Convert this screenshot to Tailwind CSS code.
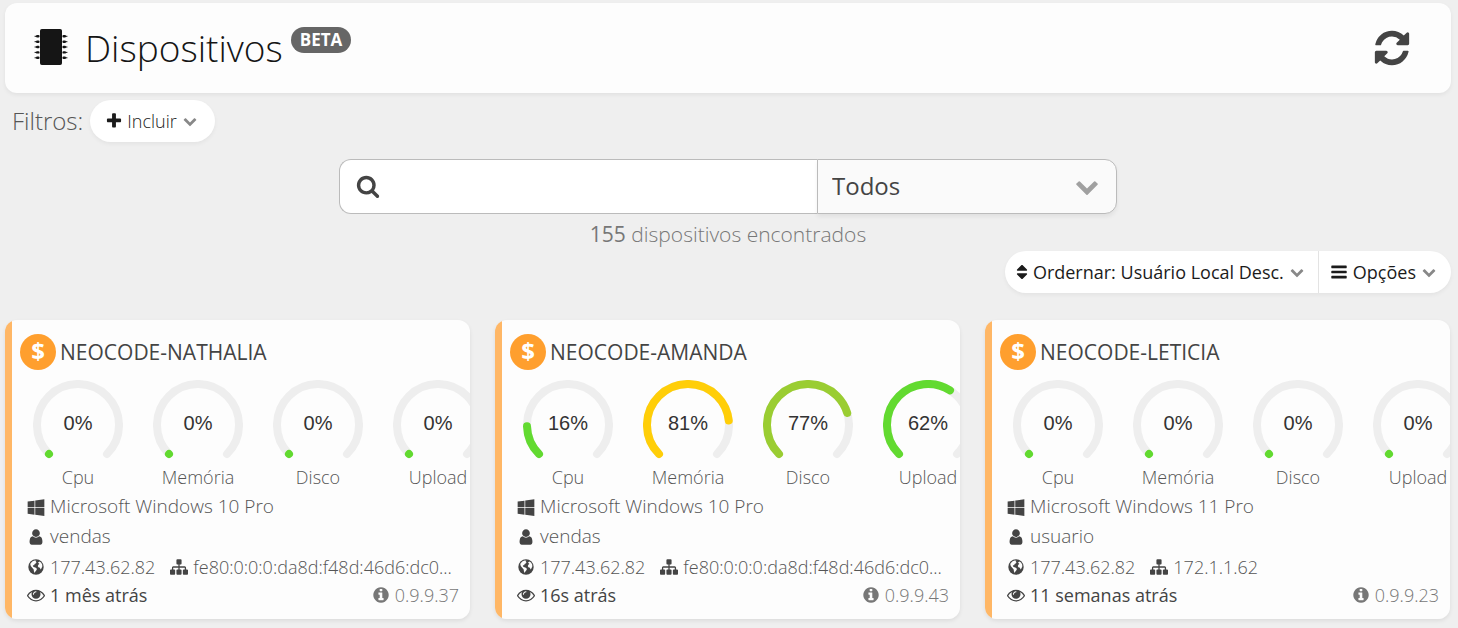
<!DOCTYPE html>
<html lang="pt-BR">
<head>
    <meta charset="UTF-8">
    <meta name="viewport" content="width=device-width, initial-scale=1.0">
    <title>Dispositivos</title>
    <script src="https://cdn.jsdelivr.net/npm/@tailwindcss/browser@4"></script>
</head>
<body class="bg-[#efefef] min-h-screen overflow-x-hidden font-['Open_Sans',sans-serif] font-light text-[#444]">
    <!-- Icon set -->
    <svg class="hidden" xmlns="http://www.w3.org/2000/svg">
        <symbol id="i-refresh" viewBox="0 0 1792 1792"><path d="M1639 1056q0 5-1 7-64 268-268 434.500t-478 166.500q-146 0-282.500-55t-243.500-157l-129 129q-19 19-45 19t-45-19-19-45v-448q0-26 19-45t45-19h448q26 0 45 19t19 45-19 45l-137 137q71 66 161 102t187 36q134 0 250-65t186-179q11-17 53-117 8-23 30-23h192q13 0 22.500 9.500t9.500 22.500zm25-800v448q0 26-19 45t-45 19h-448q-26 0-45-19t-19-45 19-45l138-138q-148-137-349-137-134 0-250 65t-186 179q-11 17-53 117-8 23-30 23h-199q-13 0-22.500-9.500t-9.500-22.500v-7q65-268 270-434.500t480-166.500q146 0 284 55.500t245 156.500l130-129q19-19 45-19t45 19 19 45z"/></symbol>
        <symbol id="i-search" viewBox="0 0 1792 1792"><path d="M1216 832q0-185-131.500-316.500t-316.500-131.500-316.500 131.500-131.500 316.500 131.500 316.500 316.500 131.500 316.500-131.500 131.500-316.500zm512 832q0 52-38 90t-90 38q-54 0-90-38l-343-342q-179 124-399 124-143 0-273.500-55.500t-225-150-150-225-55.500-273.500 55.500-273.500 150-225 225-150 273.500-55.500 273.500 55.500 225 150 150 225 55.500 273.500q0 220-124 399l343 343q37 37 37 90z"/></symbol>
        <symbol id="i-plus" viewBox="0 0 1792 1792"><path d="M1600 736v192q0 40-28 68t-68 28h-416v416q0 40-28 68t-68 28h-192q-40 0-68-28t-28-68v-416h-416q-40 0-68-28t-28-68v-192q0-40 28-68t68-28h416v-416q0-40 28-68t68-28h192q40 0 68 28t28 68v416h416q40 0 68 28t28 68z"/></symbol>
        <symbol id="i-down" viewBox="0 0 1792 1792"><path d="M1683 808l-742 741q-19 19-45 19t-45-19l-742-741q-19-19-19-45.500t19-45.500l166-165q19-19 45-19t45 19l531 531 531-531q19-19 45-19t45 19l166 165q19 19 19 45.500t-19 45.500z"/></symbol>
        <symbol id="i-sort" viewBox="0 0 1792 1792"><path d="M1408 1088q0 26-19 45l-448 448q-19 19-45 19t-45-19l-448-448q-19-19-19-45t19-45 45-19h896q26 0 45 19t19 45zm0-384q0 26-19 45t-45 19h-896q-26 0-45-19t-19-45 19-45l448-448q19-19 45-19t45 19l448 448q19 19 19 45z"/></symbol>
        <symbol id="i-bars" viewBox="0 0 1792 1792"><path d="M1664 1344v128q0 26-19 45t-45 19h-1408q-26 0-45-19t-19-45v-128q0-26 19-45t45-19h1408q26 0 45 19t19 45zm0-512v128q0 26-19 45t-45 19h-1408q-26 0-45-19t-19-45v-128q0-26 19-45t45-19h1408q26 0 45 19t19 45zm0-512v128q0 26-19 45t-45 19h-1408q-26 0-45-19t-19-45v-128q0-26 19-45t45-19h1408q26 0 45 19t19 45z"/></symbol>
        <symbol id="i-windows" viewBox="0 0 1792 1792"><path d="M746 1006v651l-682-94v-557h682zm0-743v659h-682v-565zm982 743v786l-907-125v-661h907zm0-878v794h-907v-669z"/></symbol>
        <symbol id="i-user" viewBox="0 0 1792 1792"><path d="M1536 1399q0 109-62.500 187t-150.500 78h-854q-88 0-150.500-78t-62.500-187q0-85 8.500-160.500t31.500-152 58.500-131 94-89 134.500-34.500q131 128 313 128t313-128q76 0 134.500 34.500t94 89 58.500 131 31.500 152 8.500 160.500zm-256-887q0 159-112.500 271.500t-271.500 112.500-271.500-112.500-112.500-271.500 112.500-271.500 271.500-112.500 271.500 112.500 112.500 271.500z"/></symbol>
        <symbol id="i-globe" viewBox="0 0 18 18"><circle cx="9" cy="9" r="7.700"/><path fill="#fdfdfd" d="M3.600 5.200 5.600 3.300 7.600 2.600 9.400 2.800 8.600 3.900 9.600 4.600 8.600 5.600 7.600 6 7.200 7.200 5.900 7.300 6 8.600 7.400 9.200 8.900 9.800 10 11 9.200 12.400 8.200 13.800 7.600 15 6.900 13.200 6.700 11.400 5.200 9.800 3.900 8.200 3.300 6.600zM11 4.400 12.400 3.500 14 4.500 15.200 6.600 15.300 8.600 14.400 10.600 13.600 11.400 12.900 9.700 11.400 9.200 10.800 7.900 11.500 6.600 12.400 6z"/></symbol>
        <symbol id="i-sitemap" viewBox="0 0 1792 1792"><path d="M1792 1248v320q0 40-28 68t-68 28h-320q-40 0-68-28t-28-68v-320q0-40 28-68t68-28h96v-192h-512v192h96q40 0 68 28t28 68v320q0 40-28 68t-68 28h-320q-40 0-68-28t-28-68v-320q0-40 28-68t68-28h96v-192h-512v192h96q40 0 68 28t28 68v320q0 40-28 68t-68 28h-320q-40 0-68-28t-28-68v-320q0-40 28-68t68-28h96v-192q0-52 38-90t90-38h512v-192h-96q-40 0-68-28t-28-68v-320q0-40 28-68t68-28h320q40 0 68 28t28 68v320q0 40-28 68t-68 28h-96v192h512q52 0 90 38t38 90v192h96q40 0 68 28t28 68z"/></symbol>
        <symbol id="i-eye" viewBox="0 0 1792 1792"><path d="M1664 960q-152-236-381-353 61 104 61 225 0 185-131.500 316.500t-316.500 131.500-316.500-131.500-131.500-316.500q0-121 61-225-229 117-381 353 133 205 333.500 326.500t434.500 121.500 434.500-121.500 333.500-326.500zm-720-384q0-20-14-34t-34-14q-125 0-214.500 89.500t-89.500 214.500q0 20 14 34t34 14 34-14 14-34q0-86 61-147t147-61q20 0 34-14t14-34zm848 384q0 34-20 69-140 230-376.500 368.500t-499.500 138.500-499.500-139-376.500-368q-20-35-20-69t20-69q140-229 376.500-368t499.500-139 499.500 139 376.500 368q20 35 20 69z"/></symbol>
        <symbol id="i-info" viewBox="0 0 1792 1792"><path d="M1152 1376v-160q0-14-9-23t-23-9h-96v-512q0-14-9-23t-23-9h-320q-14 0-23 9t-9 23v160q0 14 9 23t23 9h96v320h-96q-14 0-23 9t-9 23v160q0 14 9 23t23 9h448q14 0 23-9t9-23zm-128-896v-160q0-14-9-23t-23-9h-192q-14 0-23 9t-9 23v160q0 14 9 23t23 9h192q14 0 23-9t9-23zm640 416q0 209-103 385.500t-279.500 279.500-385.500 103-385.500-103-279.500-279.500-103-385.500 103-385.500 279.500-279.500 385.500-103 385.500 103 279.500 279.500 103 385.500z"/></symbol>
    </svg>

    <div class="pt-[3px] pl-[5px] pr-[7px]">
        <!-- Header -->
        <header class="flex items-center justify-between h-[90px] pl-7 pr-[39px] bg-[#fdfdfd] rounded-xl shadow-[0_2px_4px_rgba(0,0,0,0.06)]">
            <div class="flex items-center">
                <svg class="w-9 h-9 -mt-0.5 text-[#151515]" viewBox="0 0 36 36" fill="currentColor" stroke="currentColor">
                    <rect x="7.500" y="0.500" width="21" height="35" rx="1"/>
                    <path stroke-width="2.400" stroke-linecap="round" d="M4.200 7.300h1.200M4.200 12.700h1.200M4.200 18h1.200M4.200 23.400h1.200M4.200 28.800h1.200M30.600 7.300h1.200M30.600 12.700h1.200M30.600 18h1.200M30.600 23.400h1.200M30.600 28.800h1.200"/>
                    <path stroke-width="1" d="M1.600 7.300h3M1.600 12.700h3M1.600 18h3M1.600 23.400h3M1.600 28.800h3M31.400 7.300h3M31.400 12.700h3M31.400 18h3M31.400 23.400h3M31.400 28.800h3"/>
                </svg>
                <h1 class="ml-4 text-[37px] leading-[54px] text-[#151515]">Dispositivos</h1>
                <span class="ml-2 mb-4 px-[9px] rounded-full bg-[#666] text-white text-[17px] leading-[26px] font-bold">BETA</span>
            </div>
            <button type="button" aria-label="Atualizar" class="text-[#444]"><svg class="w-10 h-10" fill="currentColor"><use href="#i-refresh"/></svg></button>
        </header>

        <!-- Filters -->
        <div class="flex items-center mt-[7px] pl-[7px]">
            <span class="text-2xl leading-8 text-[#555]">Filtros:</span>
            <button type="button" class="flex items-center h-[42px] ml-[7px] pl-[15px] pr-[18px] rounded-full bg-white text-lg text-[#1b1b1b] shadow-[0_2px_4px_rgba(0,0,0,0.05)]">
                <svg class="w-[18px] h-[18px] mr-1" fill="currentColor"><use href="#i-plus"/></svg>
                Incluir
                <svg class="w-[14px] h-[14px] ml-1.5 text-[#888]" fill="currentColor"><use href="#i-down"/></svg>
            </button>
        </div>

        <!-- Search -->
        <form class="flex w-full max-w-[778px] h-[55px] mx-auto mt-[17px] font-normal">
            <label for="search" class="flex items-center w-[50px] pl-4 pb-0.5 bg-white border border-r-0 border-[#bbb] rounded-l-xl">
                <svg class="w-6 h-6" fill="currentColor" role="img" aria-label="Buscar"><use href="#i-search"/></svg>
            </label>
            <input id="search" type="text" class="flex-1 min-w-0 bg-white border-y border-[#bbb] text-2xl outline-none">
            <div class="relative w-[300px]">
                <select aria-label="Grupo" class="appearance-none w-full h-full pl-[14px] pb-0.5 bg-[#fafafa] border border-[#bbb] rounded-r-xl text-2xl text-[#444] shadow-[0_3px_4px_rgba(0,0,0,0.06)]">
                    <option>Todos</option>
                </select>
                <svg class="absolute right-[18px] top-[15px] w-6 h-6 text-[#a0a0a0] pointer-events-none" fill="currentColor"><use href="#i-down"/></svg>
            </div>
        </form>
        <p class="mt-1.5 text-center text-[21px] leading-7 text-[#777]"><span class="font-normal">155</span> dispositivos encontrados</p>

        <!-- Sorting and options -->
        <div class="flex justify-end mt-[3px]">
            <div class="flex h-[42px] rounded-full bg-white text-lg font-normal text-[#1b1b1b] shadow-[0_2px_4px_rgba(0,0,0,0.05)]">
                <button type="button" class="flex items-center pl-2 pr-[14px] border-r border-[#e3e3e3]">
                    <svg class="w-[18px] h-[18px] mr-0.5" fill="currentColor"><use href="#i-sort"/></svg>
                    Ordernar: Usuário Local Desc.
                    <svg class="w-[14px] h-[14px] ml-1.5 text-[#888]" fill="currentColor"><use href="#i-down"/></svg>
                </button>
                <button type="button" class="flex items-center pl-[11px] pr-[15px]">
                    <svg class="w-[18px] h-[18px] mr-[5px]" fill="currentColor"><use href="#i-bars"/></svg>
                    Opções
                    <svg class="w-[14px] h-[14px] ml-1.5 text-[#888]" fill="currentColor"><use href="#i-down"/></svg>
                </button>
            </div>
        </div>

        <!-- Device cards -->
        <main id="devices" class="grid grid-cols-3 gap-[25px] mt-[27px] pr-px pb-2"></main>
    </div>

    <script>
        const devices = [
            { name: 'NEOCODE-NATHALIA', usage: [0, 0, 0, 0], os: 'Microsoft Windows 10 Pro', user: 'vendas', ip: '177.43.62.82', local: 'fe80:0:0:0:da8d:f48d:46d6:dc0...', seen: '1 mês atrás', version: '0.9.9.37' },
            { name: 'NEOCODE-AMANDA', usage: [16, 81, 77, 62], os: 'Microsoft Windows 10 Pro', user: 'vendas', ip: '177.43.62.82', local: 'fe80:0:0:0:da8d:f48d:46d6:dc0...', seen: '16s atrás', version: '0.9.9.43' },
            { name: 'NEOCODE-LETICIA', usage: [0, 0, 0, 0], os: 'Microsoft Windows 11 Pro', user: 'usuario', ip: '177.43.62.82', local: '172.1.1.62', seen: '11 semanas atrás', version: '0.9.9.23' }
        ];
        const labels = ['Cpu', 'Memória', 'Disco', 'Upload'];

        function icon(name) {
            return `<svg class="w-[18px] h-[18px] shrink-0 text-[#444]" fill="currentColor"><use href="#i-${name}"/></svg>`;
        }

        function usageColor(value) {
            if (value > 80) return '#ffce08';
            if (value > 70) return '#9acd32';
            return '#62da30';
        }

        // 270 degree gauge, open at the bottom
        function gauge(value, label) {
            const arc = 'M16 74A41 41 0 1 1 74 74';
            return `
                <div class="w-[120px] shrink-0 flex flex-col items-center">
                    <svg class="w-[90px] h-[90px]" viewBox="0 0 90 90" fill="none" stroke-width="8" stroke-linecap="round">
                        <path d="${arc}" stroke="#eee"/>
                        <path d="${arc}" stroke="${usageColor(value)}" pathLength="100" stroke-dasharray="${value || 0.01} 200"/>
                        <text x="45" y="50" text-anchor="middle" fill="#333" class="font-['Liberation_Sans',sans-serif] text-xl font-normal">${value}%</text>
                    </svg>
                    <span class="-mt-[5px] text-lg leading-6 text-[#555]">${label}</span>
                </div>`;
        }

        document.getElementById('devices').innerHTML = devices.map(d => `
            <article class="min-w-0 overflow-hidden rounded-xl bg-[linear-gradient(to_right,#ffb766_7px,#fdfdfd_7px)] pl-[7px] pt-[14px] pb-3 text-lg shadow-[0_2px_4px_rgba(0,0,0,0.08)]">
                <div class="flex items-center pl-2">
                    <span class="flex items-center justify-center w-9 h-9 pb-0.5 rounded-full bg-[#ff9f2e] text-white text-2xl leading-6 font-bold">$</span>
                    <h2 class="ml-1 text-[21px] leading-9 font-normal">${d.name}</h2>
                </div>
                <div class="flex mt-2.5 pl-1.5">
                    ${d.usage.map((value, i) => gauge(value, labels[i])).join('')}
                </div>
                <div class="pt-0.5 pl-[15px] pr-[11px] text-[#555]">
                    <div class="flex items-center gap-[5px] h-8">${icon('windows')}<span class="text-[19px]">${d.os}</span></div>
                    <div class="flex items-center gap-[5px] h-7">${icon('user')}<span class="text-[19px]">${d.user}</span></div>
                    <div class="flex items-center gap-[5px] h-8">
                        ${icon('globe')}<span class="mr-2.5">${d.ip}</span>
                        ${icon('sitemap')}<span class="truncate">${d.local}</span>
                    </div>
                    <div class="flex items-center gap-[5px] h-6">
                        ${icon('eye')}<span class="font-normal text-[#444]">${d.seen}</span>
                        <span class="flex items-center gap-[5px] ml-auto text-[#777]">
                            <svg class="w-[18px] h-[18px]" fill="currentColor"><use href="#i-info"/></svg>${d.version}
                        </span>
                    </div>
                </div>
            </article>`).join('');
    </script>
</body>
</html>
